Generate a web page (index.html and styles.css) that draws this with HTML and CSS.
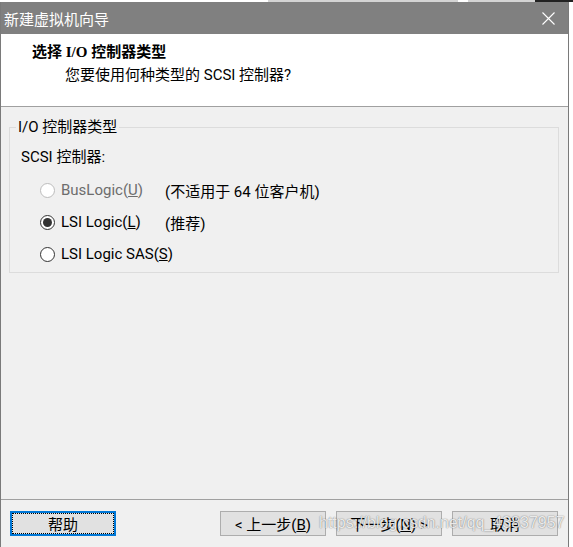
FILE: index.html
```html
<!DOCTYPE html>
<html lang="zh-CN">
<head>
    <meta charset="UTF-8">
    <meta name="viewport" content="width=device-width, initial-scale=1.0">
    <title>新建虚拟机向导</title>
    <link rel="stylesheet" href="styles.css">
</head>
<body>
    <div class="topstrip">
        <span class="strip-a"></span>
        <span class="strip-b"></span>
        <span class="strip-c"></span>
    </div>
    <div class="window">
        <div class="titlebar">
            <span class="title">新建虚拟机向导</span>
            <span class="close">
                <svg width="13" height="13" viewBox="0 0 13 13">
                    <path d="M0.5 0.5 L12.5 12.5 M12.5 0.5 L0.5 12.5" stroke="#fff" stroke-width="1.1" fill="none"/>
                </svg>
            </span>
        </div>
        <div class="header">
            <div class="head-title">选择 I/O 控制器类型</div>
            <div class="head-sub">您要使用何种类型的 SCSI 控制器?</div>
        </div>
        <div class="content">
            <fieldset class="group">
                <legend>I/O 控制器类型</legend>
                <div class="group-label">SCSI 控制器:</div>
                <div class="option disabled">
                    <span class="radio"></span>
                    <span class="opt-name">BusLogic(<u>U</u>)</span>
                    <span class="opt-note">(不适用于 64 位客户机)</span>
                </div>
                <div class="option">
                    <span class="radio checked"></span>
                    <span class="opt-name">LSI Logic(<u>L</u>)</span>
                    <span class="opt-note">(推荐)</span>
                </div>
                <div class="option">
                    <span class="radio"></span>
                    <span class="opt-name">LSI Logic SAS(<u>S</u>)</span>
                </div>
            </fieldset>
        </div>
        <div class="footer">
            <button class="btn btn-focus">帮助</button>
            <div class="nav">
                <button class="btn">&lt; 上一步(<u>B</u>)</button>
                <button class="btn">下一步(<u>N</u>) &gt;</button>
                <button class="btn">取消</button>
            </div>
            <div class="watermark">https://blog.csdn.net/qq_43837957</div>
        </div>
    </div>
</body>
</html>
```

FILE: styles.css
```css
body {
    margin: 0;
    padding: 0;
    background-color: #fff;
    font-family: Roboto, "Noto Sans CJK SC", sans-serif;
    font-size: 15px;
    color: #000;
    width: 573px;
    height: 547px;
    overflow: hidden;
}
.topstrip {
    height: 2px;
    display: flex;
}
.strip-a {
    margin-left: 268px;
    width: 190px;
    background-color: #d4d4d4;
}
.strip-b {
    margin-left: 10px;
    width: 67px;
    background-color: #d4d4d4;
}
.strip-c {
    width: 38px;
    background-color: #222;
}
.window {
    width: 569px;
    height: 545px;
    box-sizing: border-box;
    border-left: 1px solid #7a7a7a;
    border-right: 1px solid #7a7a7a;
    background-color: #f0f0f0;
    display: flex;
    flex-direction: column;
}
.titlebar {
    height: 32px;
    background-color: #808080;
    color: #fff;
    display: flex;
    align-items: center;
    padding-left: 3px;
}
.close {
    margin-left: auto;
    margin-right: 13px;
    display: flex;
}
.header {
    height: 73px;
    box-sizing: border-box;
    background-color: #fff;
    border-bottom: 1px solid #a0a0a0;
    padding-top: 8px;
}
.head-title {
    padding-left: 31px;
    line-height: 20px;
    font-family: "Liberation Serif", "Noto Sans CJK SC", serif;
    font-weight: bold;
}
.head-sub {
    padding-left: 64px;
    margin-top: 3px;
    line-height: 20px;
}
.content {
    flex: 1;
    padding: 10px 9px 0 8px;
}
.group {
    margin: 0;
    border: 1px solid #dcdcdc;
    padding: 10px 6px 2px 6px;
}
.group legend {
    padding: 0 2px;
    line-height: 20px;
}
.group-label {
    line-height: 20px;
    margin-left: 5px;
}
.option {
    height: 32px;
    display: flex;
    align-items: center;
    padding-left: 25px;
    white-space: nowrap;
}
.group-label + .option {
    margin-top: 7px;
}
.radio {
    flex-shrink: 0;
    width: 15px;
    height: 15px;
    box-sizing: border-box;
    border: 1px solid #333;
    border-radius: 50%;
    background-color: #fff;
    margin-left: -1px;
    margin-right: 6px;
    display: flex;
    align-items: center;
    justify-content: center;
}
.radio.checked::after {
    content: "";
    width: 9px;
    height: 9px;
    border-radius: 50%;
    background-color: #333;
}
.opt-name {
    flex-shrink: 0;
    width: 104px;
}
.option.disabled .radio {
    border-color: #bcbcbc;
}
.option.disabled .opt-name {
    color: #6d6d6d;
}
.footer {
    position: relative;
    height: 48px;
    box-sizing: border-box;
    border-top: 1px solid #a0a0a0;
    padding: 11px 10px 0 9px;
    display: flex;
    align-items: flex-start;
}
.nav {
    margin-left: auto;
    display: flex;
    gap: 10px;
}
.btn {
    width: 106px;
    height: 25px;
    padding: 0;
    background-color: #e1e1e1;
    border: 1px solid #adadad;
    font-family: Roboto, "Noto Sans CJK SC", sans-serif;
    font-size: 15px;
    color: #000;
}
.btn-focus {
    border: 2px solid #0078d7;
    outline: 1px dotted #000;
    outline-offset: -3px;
}
.watermark {
    position: absolute;
    left: 318px;
    top: 13px;
    line-height: 20px;
    font-family: "Liberation Sans", sans-serif;
    font-size: 16px;
    color: rgba(255, 255, 255, 0.85);
    text-shadow: 0 0 1px rgba(0, 0, 0, 0.45), 0 0 2px rgba(0, 0, 0, 0.2);
    white-space: nowrap;
}
```
